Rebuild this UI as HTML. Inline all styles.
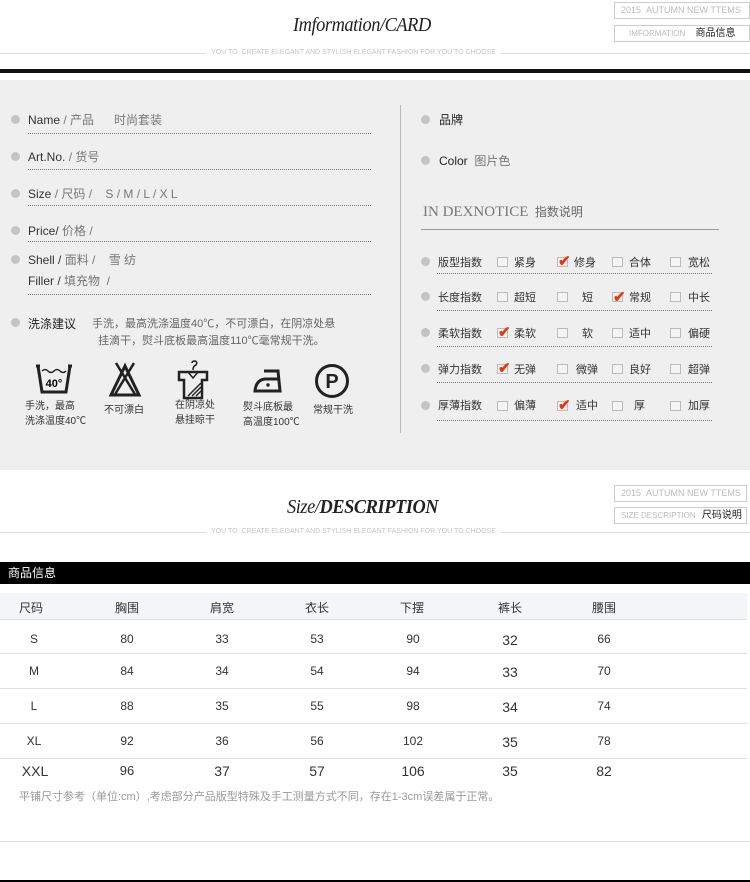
<!DOCTYPE html>
<html><head><meta charset="utf-8"><style>
*{margin:0;padding:0;box-sizing:border-box}
body{width:750px;height:882px;position:relative;background:#fff;font-family:"Liberation Sans","Noto Sans CJK SC",sans-serif;overflow:hidden;color:#333}
.a{position:absolute;white-space:nowrap}
.t{font-family:"Liberation Serif","Noto Serif CJK SC",serif;font-style:italic;font-size:20px;color:#222;letter-spacing:-0.5px;transform:scaleX(0.92);transform-origin:left}
.box{position:absolute;border:1px solid #ccc;font-size:9px;color:#bbb;padding-left:6px;line-height:15px;background:#fff}
.sub{font-size:7px;color:#c4c4c4;background:#fff;padding:0 5px}
.dot{position:absolute;width:9px;height:9px;border-radius:50%;background:#c4c4c4}
.dl{position:absolute;border-top:1px dotted #777;height:0}
.f12{font-size:12px}
.g{color:#777}
.cb{position:absolute;width:11px;height:10px;border:1px solid #bbb;background:#f4f4f4}
.ck{position:absolute;color:#f2320f;font-size:15px;font-weight:bold;line-height:1}
.r{font-size:11px;color:#333}
.c{position:absolute;font-size:12px;color:#333;transform:translateX(-50%);white-space:nowrap}
.hl{position:absolute;left:0;width:747px;height:1px;background:#dde1e6}
</style></head><body>

<div class="a t" style="left:293px;top:14px">Imformation/CARD</div>
<div class="box" style="left:614px;top:2px;width:136px;height:17px">2015 &nbsp;AUTUMN NEW TTEMS</div>
<div class="box" style="left:614px;top:25px;width:136px;height:17px;font-size:8px;padding-left:14px">IMFORMATION <span style="color:#222;font-size:10px;margin-left:8px">商品信息</span></div>
<div class="a" style="left:0;top:53px;width:750px;height:1px;background:#ddd"></div>
<div class="a sub" style="left:206px;top:49px">YOU TO &nbsp;CREATE ELEGANT AND STYLISH ELEGANT FASHION FOR YOU TO CHOOSE</div>
<div class="a" style="left:0;top:69px;width:750px;height:4px;background:#111"></div>

<div class="a" style="left:0;top:80px;width:750px;height:390px;background:#efefef"></div>
<div class="a" style="left:400px;top:105px;width:1px;height:328px;background:#bbb"></div>

<div class="dot" style="left:11px;top:115px"></div>
<div class="a f12" style="left:28px;top:111px">Name <span class="g">/ 产品 &nbsp;&nbsp;&nbsp;&nbsp; 时尚套装</span></div>
<div class="dl" style="left:28px;top:133px;width:343px"></div>
<div class="dot" style="left:11px;top:152px"></div>
<div class="a f12" style="left:28px;top:148px">Art.No. <span class="g">/ 货号</span></div>
<div class="dl" style="left:28px;top:169px;width:343px"></div>
<div class="dot" style="left:11px;top:189px"></div>
<div class="a f12" style="left:28px;top:185px">Size <span class="g">/ 尺码 / &nbsp;&nbsp; S / M / L / X L</span></div>
<div class="dl" style="left:28px;top:205px;width:343px"></div>
<div class="dot" style="left:11px;top:226px"></div>
<div class="a f12" style="left:28px;top:222px">Price/ <span class="g">价格 /</span></div>
<div class="dl" style="left:28px;top:241px;width:343px"></div>
<div class="dot" style="left:11px;top:255px"></div>
<div class="a f12" style="left:28px;top:251px">Shell / <span class="g">面料 / &nbsp;&nbsp; 雪 纺</span></div>
<div class="a f12" style="left:28px;top:272px">Filler / <span class="g">填充物 &nbsp;/</span></div>
<div class="dl" style="left:28px;top:294px;width:343px"></div>
<div class="dot" style="left:11px;top:318px"></div>
<div class="a f12" style="left:28px;top:315px;color:#222">洗涤建议</div>
<div class="a" style="left:92px;top:316px;font-size:11px;color:#666;line-height:17px">手洗，最高洗涤温度40℃，不可漂白，在阴凉处悬<br>&nbsp;&nbsp;挂滴干，熨斗底板最高温度110℃毫常规干洗。</div>

<svg class="a" style="left:34px;top:362px" width="40" height="34" viewBox="0 0 40 34"><path d="M2 4 L6 4 M34 4 L38 4 M4 4 L8 30 L32 30 L36 4" fill="none" stroke="#222" stroke-width="3"/><path d="M8 9 q3 -3 6 0 t6 0 t6 0 t6 0" fill="none" stroke="#222" stroke-width="1.5"/><text x="20" y="25" font-size="11" font-weight="bold" text-anchor="middle" font-family="Liberation Sans">40°</text></svg>
<svg class="a" style="left:108px;top:360px" width="34" height="38" viewBox="0 0 34 38"><path d="M17 6 L3 35 L31 35 Z" fill="none" stroke="#222" stroke-width="3"/><path d="M8 3 L28 36 M26 3 L6 36" stroke="#222" stroke-width="2.5"/></svg>
<svg class="a" style="left:176px;top:360px" width="34" height="40" viewBox="0 0 34 40"><path d="M17 10 q0 -4 3 -5 q2 -3 -1 -4 q-3 0 -3 2" fill="none" stroke="#222" stroke-width="1.5"/><path d="M3 12 L31 12 L31 20 L26 20 L26 38 L8 38 L8 20 L3 20 Z" fill="none" stroke="#222" stroke-width="2.5"/><path d="M12 12 L17 18 L22 12 M12 36 L25 23 M16 36 L25 27 M20 36 L25 31" fill="none" stroke="#222" stroke-width="1.5"/></svg>
<svg class="a" style="left:252px;top:368px" width="32" height="26" viewBox="0 0 32 26"><path d="M12 3 L26 3 L28 23 L3 23 Q4 12 13 11 L26 11" fill="none" stroke="#222" stroke-width="3"/><circle cx="16" cy="17" r="1.7" fill="#222"/></svg>
<svg class="a" style="left:314px;top:363px" width="36" height="36" viewBox="0 0 36 36"><circle cx="18" cy="18" r="15.5" fill="none" stroke="#222" stroke-width="3"/><text x="18" y="25" font-size="20" font-weight="bold" text-anchor="middle" font-family="Liberation Sans" fill="#222">P</text></svg>
<div class="a" style="left:25px;top:399px;font-size:10px;color:#333;line-height:15px">手洗，最高<br>洗涤温度40℃</div>
<div class="a" style="left:104px;top:401px;font-size:10px;color:#333">不可漂白</div>
<div class="a" style="left:175px;top:398px;font-size:10px;color:#333;line-height:15px">在阴凉处<br>悬挂晾干</div>
<div class="a" style="left:243px;top:400px;font-size:10px;color:#333;line-height:15px">熨斗底板最<br>高温度100℃</div>
<div class="a" style="left:313px;top:401px;font-size:10px;color:#333">常规干洗</div>

<div class="dot" style="left:421px;top:115px"></div>
<div class="a f12" style="left:439px;top:111px;color:#222">品牌</div>
<div class="dot" style="left:421px;top:156px"></div>
<div class="a f12" style="left:439px;top:152px;color:#222">Color &nbsp;<span class="g">图片色</span></div>
<div class="a" style="left:423px;top:203px;font-family:'Liberation Serif',serif;font-size:15px;color:#777">IN DEXNOTICE <span style="font-family:'Noto Sans CJK SC',sans-serif;font-size:12px;color:#666">&nbsp;指数说明</span></div>
<div class="a" style="left:421px;top:229px;width:298px;height:1px;background:#999"></div>

<div class="dot" style="left:421px;top:257px"></div><div class="a r" style="left:438px;top:254px">版型指数</div>
<div class="dot" style="left:421px;top:292px"></div><div class="a r" style="left:438px;top:289px">长度指数</div>
<div class="dot" style="left:421px;top:328px"></div><div class="a r" style="left:438px;top:325px">柔软指数</div>
<div class="dot" style="left:421px;top:364px"></div><div class="a r" style="left:438px;top:361px">弹力指数</div>
<div class="dot" style="left:421px;top:401px"></div><div class="a r" style="left:438px;top:397px">厚薄指数</div>
<div class="dl" style="left:437px;top:273px;width:275px"></div>
<div class="dl" style="left:437px;top:310px;width:275px"></div>
<div class="dl" style="left:437px;top:346px;width:275px"></div>
<div class="dl" style="left:437px;top:382px;width:275px"></div>
<div class="dl" style="left:437px;top:420px;width:275px"></div>

<div class="cb" style="left:497px;top:257px"></div><div class="a r" style="left:514px;top:254px">紧身</div>
<div class="cb" style="left:557px;top:257px"></div><div class="ck" style="left:558px;top:254px">✔</div><div class="a r" style="left:574px;top:254px">修身</div>
<div class="cb" style="left:612px;top:257px"></div><div class="a r" style="left:629px;top:254px">合体</div>
<div class="cb" style="left:670px;top:257px"></div><div class="a r" style="left:688px;top:254px">宽松</div>
<div class="cb" style="left:497px;top:292px"></div><div class="a r" style="left:514px;top:289px">超短</div>
<div class="cb" style="left:557px;top:292px"></div><div class="a r" style="left:582px;top:289px">短</div>
<div class="cb" style="left:612px;top:292px"></div><div class="ck" style="left:613px;top:290px">✔</div><div class="a r" style="left:629px;top:289px">常规</div>
<div class="cb" style="left:670px;top:292px"></div><div class="a r" style="left:688px;top:289px">中长</div>
<div class="cb" style="left:497px;top:328px"></div><div class="ck" style="left:498px;top:325px">✔</div><div class="a r" style="left:514px;top:325px">柔软</div>
<div class="cb" style="left:557px;top:328px"></div><div class="a r" style="left:582px;top:325px">软</div>
<div class="cb" style="left:612px;top:328px"></div><div class="a r" style="left:629px;top:325px">适中</div>
<div class="cb" style="left:670px;top:328px"></div><div class="a r" style="left:688px;top:325px">偏硬</div>
<div class="cb" style="left:497px;top:364px"></div><div class="ck" style="left:498px;top:361px">✔</div><div class="a r" style="left:514px;top:361px">无弹</div>
<div class="cb" style="left:557px;top:364px"></div><div class="a r" style="left:576px;top:361px">微弹</div>
<div class="cb" style="left:612px;top:364px"></div><div class="a r" style="left:629px;top:361px">良好</div>
<div class="cb" style="left:670px;top:364px"></div><div class="a r" style="left:688px;top:361px">超弹</div>
<div class="cb" style="left:497px;top:401px"></div><div class="a r" style="left:514px;top:397px">偏薄</div>
<div class="cb" style="left:557px;top:401px"></div><div class="ck" style="left:558px;top:398px">✔</div><div class="a r" style="left:576px;top:397px">适中</div>
<div class="cb" style="left:612px;top:401px"></div><div class="a r" style="left:634px;top:397px">厚</div>
<div class="cb" style="left:670px;top:401px"></div><div class="a r" style="left:688px;top:397px">加厚</div>

<div class="a t" style="left:287px;top:496px;font-weight:bold"><span style="font-weight:normal">Size/</span>DESCRIPTION</div>
<div class="box" style="left:614px;top:485px;width:133px;height:17px">2015 &nbsp;AUTUMN NEW TTEMS</div>
<div class="box" style="left:614px;top:507px;width:133px;height:17px;font-size:8px">SIZE DESCRIPTION <span style="color:#222;font-size:10px;margin-left:4px">尺码说明</span></div>
<div class="a" style="left:0;top:532px;width:750px;height:1px;background:#ddd"></div>
<div class="a sub" style="left:206px;top:528px">YOU TO &nbsp;CREATE ELEGANT AND STYLISH ELEGANT FASHION FOR YOU TO CHOOSE</div>

<div class="a" style="left:0;top:562px;width:750px;height:22px;background:#000;color:#fff;font-size:12px;line-height:22px;padding-left:8px">商品信息</div>

<div class="a" style="left:0;top:593px;width:747px;height:26px;background:#f4f5f7"></div>
<div class="hl" style="top:619px"></div>
<div class="hl" style="top:653px"></div>
<div class="hl" style="top:688px"></div>
<div class="hl" style="top:723px"></div>
<div class="hl" style="top:758px"></div>
<div class="a" style="left:0;top:841px;width:750px;height:1px;background:#ddd"></div>
<div class="a" style="left:0;top:880px;width:750px;height:2px;background:#000"></div>

<div class="c" style="left:31px;top:599px">尺码</div><div class="c" style="left:127px;top:599px">胸围</div><div class="c" style="left:222px;top:599px">肩宽</div><div class="c" style="left:317px;top:599px">衣长</div><div class="c" style="left:412px;top:599px">下摆</div><div class="c" style="left:510px;top:599px">裤长</div><div class="c" style="left:604px;top:599px">腰围</div>

<div class="c" style="left:34px;top:632px">S</div><div class="c" style="left:127px;top:632px">80</div><div class="c" style="left:222px;top:632px">33</div><div class="c" style="left:317px;top:632px">53</div><div class="c" style="left:413px;top:632px">90</div><div class="c" style="left:510px;top:632px;font-size:14px">32</div><div class="c" style="left:604px;top:632px">66</div>
<div class="c" style="left:34px;top:664px">M</div><div class="c" style="left:127px;top:664px">84</div><div class="c" style="left:222px;top:664px">34</div><div class="c" style="left:317px;top:664px">54</div><div class="c" style="left:413px;top:664px">94</div><div class="c" style="left:510px;top:664px;font-size:14px">33</div><div class="c" style="left:604px;top:664px">70</div>
<div class="c" style="left:34px;top:699px">L</div><div class="c" style="left:127px;top:699px">88</div><div class="c" style="left:222px;top:699px">35</div><div class="c" style="left:317px;top:699px">55</div><div class="c" style="left:413px;top:699px">98</div><div class="c" style="left:510px;top:699px;font-size:14px">34</div><div class="c" style="left:604px;top:699px">74</div>
<div class="c" style="left:34px;top:734px">XL</div><div class="c" style="left:127px;top:734px">92</div><div class="c" style="left:222px;top:734px">36</div><div class="c" style="left:317px;top:734px">56</div><div class="c" style="left:413px;top:734px">102</div><div class="c" style="left:510px;top:734px;font-size:14px">35</div><div class="c" style="left:604px;top:734px">78</div>
<div class="c" style="left:35px;top:763px;font-size:14px">XXL</div><div class="c" style="left:127px;top:763px;font-size:13px">96</div><div class="c" style="left:222px;top:763px;font-size:14px">37</div><div class="c" style="left:317px;top:763px;font-size:14px">57</div><div class="c" style="left:413px;top:763px;font-size:14px">106</div><div class="c" style="left:510px;top:763px;font-size:14px">35</div><div class="c" style="left:604px;top:763px;font-size:14px">82</div>

<div class="a" style="left:19px;top:788px;font-size:11px;color:#999">平铺尺寸参考（单位:cm）,考虑部分产品版型特殊及手工测量方式不同，存在1-3cm误差属于正常。</div>
</body></html>
